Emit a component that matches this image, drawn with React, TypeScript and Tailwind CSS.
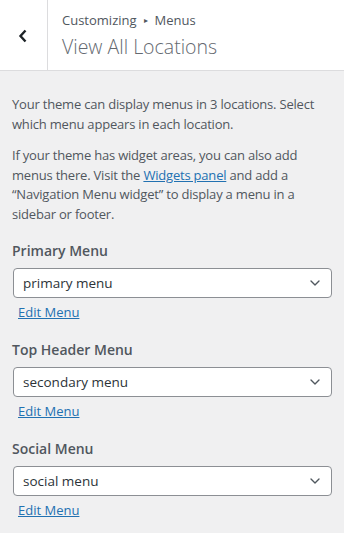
import { ChevronDown } from "lucide-react";

const locations = [
  { label: "Primary Menu", value: "primary menu" },
  { label: "Top Header Menu", value: "secondary menu" },
  { label: "Social Menu", value: "social menu" },
];

export default function App() {
  return (
    <div className="min-h-screen bg-[#f0f0f1] font-['Open_Sans',sans-serif] text-[#50575e]">
      {/* header */}
      <div className="flex h-[71px] bg-white border-b border-[#dcdcde]">
        <button className="w-[48px] shrink-0 border-r border-[#dcdcde] flex items-center justify-center">
          <svg width="10" height="14" viewBox="0 0 10 14" className="mr-[1px] mt-[1px]">
            <path d="M7.5 1.5 L2.5 7 L7.5 12.5" fill="none" stroke="#1d2327" strokeWidth="2.4" />
          </svg>
        </button>
        <div className="pl-[14px] pt-[11px]">
          <div className="text-[13px] leading-[18px] text-[#50575e] flex items-center">
            Customizing
            <span className="mx-[7px] text-[8px]">▸</span>
            Menus
          </div>
          <div className="text-[19.5px] leading-[28px] mt-[4px] font-light text-[#646970]">View All Locations</div>
        </div>
      </div>

      {/* description */}
      <div className="px-[12px] pt-[24px] text-[13px] leading-[19.5px] text-[#50575e] tracking-[-0.2px]">
        <p className="mb-[12px]">
          Your theme can display menus in 3 locations. Select which menu appears in each location.
        </p>
        <p>
          If your theme has widget areas, you can also add menus there. Visit the{" "}
          <a href="#" className="text-[#2271b1] underline">Widgets panel</a> and add a
          “Navigation Menu widget” to display a menu in a sidebar or footer.
        </p>
      </div>

      {/* locations */}
      <div className="px-[12px] pt-[17px]">
        {locations.map((loc) => (
          <div key={loc.label} className="mb-[17px]">
            <div className="text-[14px] leading-[20px] font-semibold text-[#50575e]">{loc.label}</div>
            <div className="mt-[7px] ml-[1px] h-[30px] bg-white border border-[#8c8f94] rounded-[4px] flex items-center justify-between pl-[9px] pr-[8px]">
              <span className="text-[13.5px] text-[#2c3338]">{loc.value}</span>
              <ChevronDown size={16} strokeWidth={2} color="#50575e" />
            </div>
            <a href="#" className="inline-block mt-[4px] ml-[6px] text-[13px] leading-[20px] text-[#2271b1] underline">
              Edit Menu
            </a>
          </div>
        ))}
      </div>
    </div>
  );
}
